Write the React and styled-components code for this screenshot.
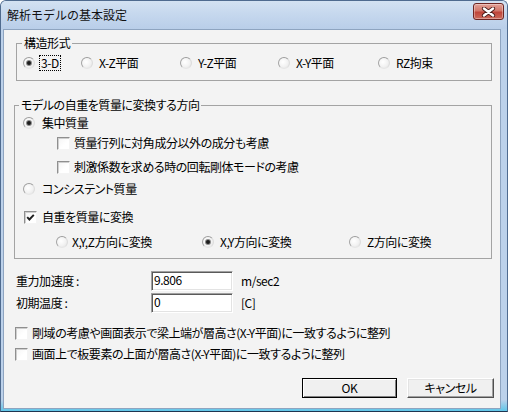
import styled, { createGlobalStyle } from 'styled-components'

const GlobalStyle = createGlobalStyle`
  html, body {
    margin: 0;
    padding: 0;
  }
  body {
    font-family: "Noto Sans CJK JP", "Noto Sans", sans-serif;
    font-size: 12px;
    font-feature-settings: "palt";
    letter-spacing: -0.45px;
    color: #000;
    background: #fff;
  }
`

// Window frame
const Window = styled.div`
  width: 508px;
  height: 412px;
  box-sizing: border-box;
  display: flex;
  flex-direction: column;
  border: 1px solid #4f6b8f;
  border-bottom-color: #1f3550;
  border-radius: 6px 6px 0 0;
  background: #bcd1ea;
  overflow: hidden;
`
const TitleBar = styled.div`
  height: 28px;
  flex: none;
  display: flex;
  align-items: center;
  justify-content: space-between;
  padding: 0 3px 0 6px;
  background: linear-gradient(to bottom, #d3e2f2 0%, #c6d8ee 45%, #b9cee9 100%);
`
const Title = styled.span`
  font-size: 12px;
  line-height: 16px;
  color: #111;
  margin-top: -1px;
  letter-spacing: 0;
  font-feature-settings: normal;
`
const CloseButton = styled.div`
  width: 31px;
  height: 17px;
  box-sizing: border-box;
  margin-top: -7px;
  border: 1px solid #6d2522;
  border-radius: 3px;
  display: flex;
  align-items: center;
  justify-content: center;
  background: linear-gradient(to bottom, #e3a197 0%, #d2776a 45%, #c0453a 55%, #cc6a5b 100%);
  box-shadow: inset 0 0 0 1px rgba(255, 255, 255, 0.35);
`
const FrameBody = styled.div`
  flex: 1;
  display: flex;
  padding: 0 6px 2px 2px;
  background: linear-gradient(to bottom, #bcd1ea 0%, #bcd1ea 97%, #5fc6e8 100%);
`
const Client = styled.div`
  flex: 1;
  display: flex;
  flex-direction: column;
  border: 1px solid #8ea4c0;
  background: #f3f3f3;
`

// Group boxes
const Group = styled.fieldset`
  min-width: 0;
  border: 1px solid #a3a3a3;
  margin: ${p => p.$top}px 8px 0 ${p => p.$left}px;
  padding: ${p => p.$padTop}px 0 ${p => p.$padBottom}px;
`
const Legend = styled.legend`
  height: 14px;
  line-height: 14px;
  padding: 0 2px;
  margin-left: ${p => p.$offset}px;
`

// Option rows
const Row = styled.div`
  display: flex;
  align-items: center;
  height: 14px;
  padding-left: ${p => p.$indent}px;
  margin-top: ${p => p.$top || 0}px;
`
const OptionWrap = styled.div`
  display: flex;
  align-items: center;
  gap: ${p => p.$gap}px;
  width: ${p => (p.$width ? `${p.$width}px` : 'auto')};
  flex: none;
`
const Radio = styled.span`
  position: relative;
  width: 12px;
  height: 12px;
  box-sizing: border-box;
  border-radius: 50%;
  border: 1px solid;
  border-color: #9c9c9c #dcdcdc #e6e6e6 #a4a4a4;
  background: radial-gradient(circle at 40% 40%, #ffffff 0%, #f2f2f2 55%, #dedede 100%);
  flex: none;

  ${p => p.$checked && `
    &::after {
      content: "";
      position: absolute;
      left: 3px;
      top: 3px;
      width: 4px;
      height: 4px;
      border-radius: 50%;
      background: #1d1d1d;
      box-shadow: 0 0 0 1px #8a8a8a;
    }
  `}
`
const Check = styled.span`
  width: 13px;
  height: 13px;
  box-sizing: border-box;
  border: 1px solid;
  border-color: #8f8f8f #f4f4f4 #f4f4f4 #8f8f8f;
  box-shadow: inset 1px 1px 0 #cfcfcf;
  background: linear-gradient(135deg, #f4f4f4 0%, #ffffff 60%);
  display: flex;
  align-items: center;
  justify-content: center;
  flex: none;
`
const OptionText = styled.span`
  line-height: 14px;
  white-space: nowrap;
  ${p => p.$focus && `
    outline: 1px dotted #000;
    outline-offset: 0;
    padding: 0 1px;
    margin-left: -2px;
  `}
`

const Option = ({ type = 'radio', checked, focus, gap = 7, width, children }) => (
  <OptionWrap $gap={gap} $width={width}>
    {type === 'radio' ? (
      <Radio $checked={checked} />
    ) : (
      <Check>
        {checked && (
          <svg width="9" height="9" viewBox="0 0 9 9">
            <path d="M1.2 4.2 L3.4 6.5 L7.8 1.8" fill="none" stroke="#1e1e1e" strokeWidth="1.9" />
          </svg>
        )}
      </Check>
    )}
    <OptionText $focus={focus}>{children}</OptionText>
  </OptionWrap>
)

// Value fields
const FieldRow = styled.div`
  display: flex;
  align-items: center;
  height: 20px;
  padding-left: 12px;
  margin-top: ${p => p.$top}px;
`
const FieldLabel = styled.span`
  width: 135px;
  line-height: 14px;
  flex: none;
`
const TextBox = styled.div`
  width: 82px;
  height: 20px;
  box-sizing: border-box;
  border: 1px solid;
  border-color: #a0a0a0 #ffffff #ffffff #a0a0a0;
  box-shadow: inset 1px 1px 0 #5a5a5a, inset -1px -1px 0 #e3e3e3;
  background: #fff;
  padding: 1px 2px 0;
  line-height: 14px;
  flex: none;
`
const Unit = styled.span`
  margin-left: 8px;
  line-height: 14px;
`

// Dialog buttons
const ButtonRow = styled.div`
  display: flex;
  justify-content: flex-end;
  gap: 10px;
  padding-right: 6px;
  margin-top: 17px;
`
const Button = styled.div`
  width: ${p => p.$width}px;
  height: 20px;
  box-sizing: border-box;
  display: flex;
  align-items: center;
  justify-content: center;
  background: #f0f0f0;
  line-height: 14px;
  border: 1px solid;
  border-color: ${p => (p.$default ? '#000' : '#ffffff #505050 #505050 #ffffff')};
  box-shadow: ${p => (p.$default
    ? 'inset 1px 1px 0 #fff, inset -1px -1px 0 #808080'
    : 'inset -1px -1px 0 #a0a0a0, inset 1px 1px 0 #e3e3e3')};
`

const App = () => {
  return (
    <>
      <GlobalStyle />
      <Window>
        <TitleBar>
          <Title>解析モデルの基本設定</Title>
          <CloseButton>
            <svg width="15" height="10" viewBox="0 0 15 10">
              <path d="M3 1.5 L12 8.5 M12 1.5 L3 8.5" stroke="#4a1d1a" strokeWidth="4.2" strokeLinecap="round" />
              <path d="M3 1.5 L12 8.5 M12 1.5 L3 8.5" stroke="#ffffff" strokeWidth="2.4" strokeLinecap="round" />
            </svg>
          </CloseButton>
        </TitleBar>
        <FrameBody>
          <Client>
            <Group $top={6} $left={12} $padTop={6} $padBottom={10}>
              <Legend $offset={5}>構造形式</Legend>
              <Row $indent={6}>
                <Option checked focus width={58}>3-D</Option>
                <Option width={99} gap={6}>X-Z平面</Option>
                <Option width={98} gap={6}>Y-Z平面</Option>
                <Option width={100} gap={6}>X-Y平面</Option>
                <Option gap={6}>RZ拘束</Option>
              </Row>
            </Group>

            <Group $top={17} $left={10} $padTop={4} $padBottom={9}>
              <Legend $offset={4}>モデルの自重を質量に変換する方向</Legend>
              <Row $indent={8}>
                <Option checked>集中質量</Option>
              </Row>
              <Row $indent={42} $top={6}>
                <Option type="check" gap={4}>質量行列に対角成分以外の成分も考慮</Option>
              </Row>
              <Row $indent={42} $top={10}>
                <Option type="check" gap={4}>刺激係数を求める時の回転剛体モードの考慮</Option>
              </Row>
              <Row $indent={8} $top={8}>
                <Option>コンシステント質量</Option>
              </Row>
              <Row $indent={9} $top={14}>
                <Option type="check" checked gap={5}>自重を質量に変換</Option>
              </Row>
              <Row $indent={41} $top={11}>
                <Option width={146} gap={4}>X,Y,Z方向に変換</Option>
                <Option checked width={147} gap={6}>X,Y方向に変換</Option>
                <Option gap={6}>Z方向に変換</Option>
              </Row>
            </Group>

            <FieldRow $top={12}>
              <FieldLabel>重力加速度 :</FieldLabel>
              <TextBox>9.806</TextBox>
              <Unit>m/sec2</Unit>
            </FieldRow>
            <FieldRow $top={2}>
              <FieldLabel>初期温度 :</FieldLabel>
              <TextBox>0</TextBox>
              <Unit>[C]</Unit>
            </FieldRow>

            <Row $indent={11} $top={13}>
              <Option type="check" gap={4}>剛域の考慮や画面表示で梁上端が層高さ(X-Y平面)に一致するように整列</Option>
            </Row>
            <Row $indent={11} $top={7}>
              <Option type="check" gap={4}>画面上で板要素の上面が層高さ(X-Y平面)に一致するように整列</Option>
            </Row>

            <ButtonRow>
              <Button $default $width={95}>OK</Button>
              <Button $width={87}>キャンセル</Button>
            </ButtonRow>
          </Client>
        </FrameBody>
      </Window>
    </>
  )
}

export default App
